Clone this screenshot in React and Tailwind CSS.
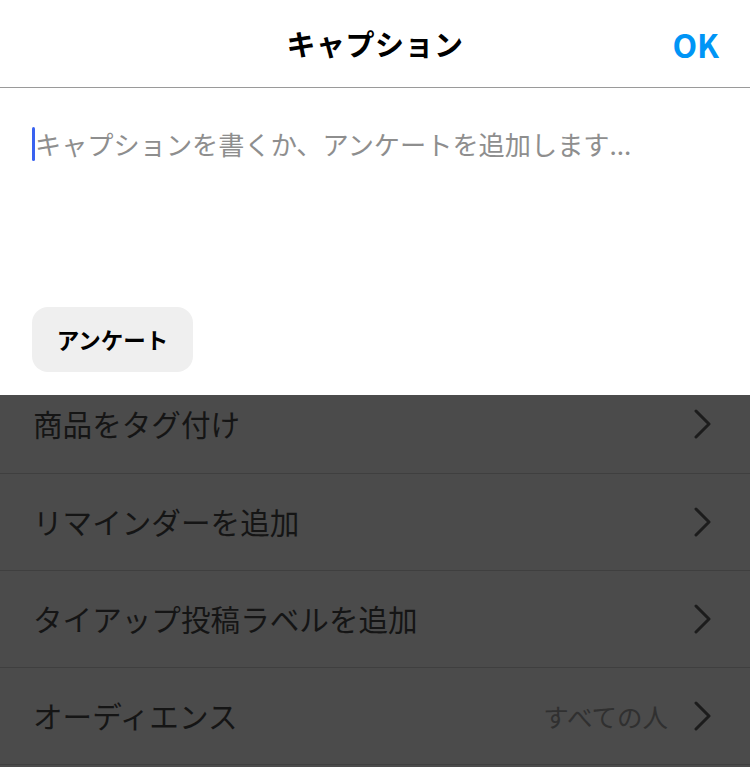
const jp = { fontFamily: '"Noto Sans CJK JP", "Noto Sans", sans-serif' };

function Chevron() {
  return (
    <svg width="18" height="30" viewBox="0 0 18 30" fill="none" className="shrink-0">
      <polyline
        points="2,2 15,15 2,28"
        stroke="#1c1c1c"
        strokeWidth="3"
        strokeLinecap="round"
        strokeLinejoin="round"
      />
    </svg>
  );
}

function Row({ label, value, first }) {
  return (
    <div
      className={`flex items-center justify-between pl-[33px] pr-[38px] border-b border-[#3f3f3f] ${
        first ? "h-[79px] pb-[21px]" : "h-[97px]"
      }`}
    >
      <span className="text-[29.6px] text-[#151515] leading-none">{label}</span>
      <div className="flex items-center gap-[26px]">
        {value && (
          <span className="text-[25.5px] text-[#303030] leading-none">{value}</span>
        )}
        <Chevron />
      </div>
    </div>
  );
}

export default function App() {
  return (
    <div className="w-[750px] h-[767px] overflow-hidden bg-[#4b4b4b]" style={jp}>
      <div className="bg-white">
        <div className="h-[88px] relative flex items-center justify-center border-b border-[#9a9a9a]">
          <span className="text-[29px] font-bold text-black tracking-[0.5px]">キャプション</span>
          <span className="absolute right-[31px] top-1/2 -translate-y-1/2 text-[32px] font-bold text-[#0095f6]">
            OK
          </span>
        </div>
        <div className="h-[307px] flex flex-col justify-between pl-[32px] pt-[39px] pb-[23px]">
          <div className="flex items-center h-[34px]">
            <div className="w-[3px] h-[34px] bg-[#3a62f0] rounded-full" />
            <span className="text-[26.2px] text-[#8e8e8e] leading-none">
              キャプションを書くか、アンケートを追加します...
            </span>
          </div>
          <button className="w-[161px] h-[65px] rounded-[16px] bg-[#efefef] text-[22.5px] font-bold text-black">
            アンケート
          </button>
        </div>
      </div>
      <Row label="商品をタグ付け" first />
      <Row label="リマインダーを追加" />
      <Row label="タイアップ投稿ラベルを追加" />
      <Row label="オーディエンス" value="すべての人" />
    </div>
  );
}
